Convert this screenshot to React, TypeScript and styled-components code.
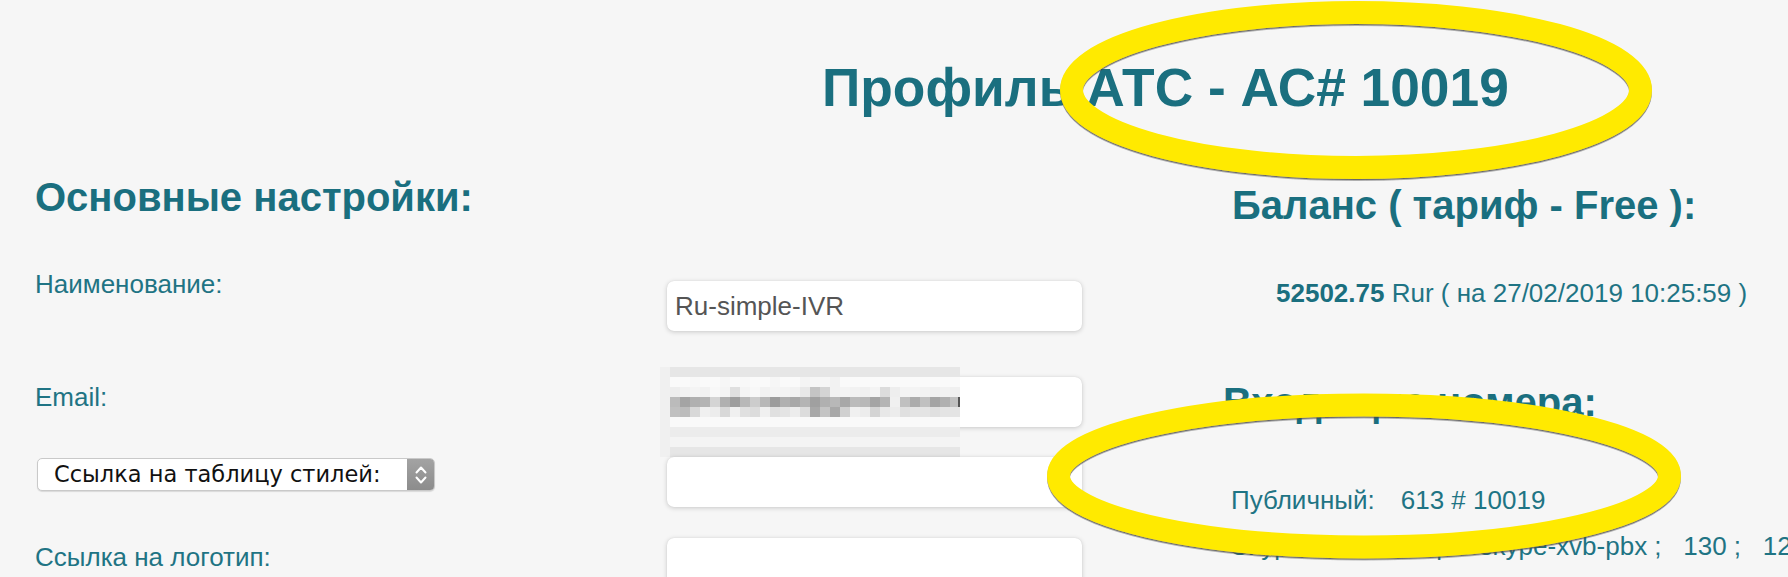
import React from 'react'
import styled, { createGlobalStyle } from 'styled-components'

const TEAL = '#1a6f7f'
const TEAL_TEXT = '#1f7484'

const GlobalStyle = createGlobalStyle`
  html, body {
    margin: 0;
    background: #f6f6f6;
    overflow: hidden;
  }

  body {
    font-family: "Liberation Sans", Arial, sans-serif;
  }
`

const Page = styled.div`
  position: relative;
  width: 1788px;
  height: 577px;
  padding: 57px 0 0 35px;
  box-sizing: border-box;
  overflow: hidden;
  white-space: nowrap;
`

const Title = styled.h1`
  margin: 0 0 0 787px;
  font-size: 53.3px;
  line-height: 62px;
  font-weight: bold;
  color: ${TEAL};
`

const Columns = styled.div`
  display: flex;
  align-items: flex-start;
`

const LeftColumn = styled.div`
  width: 1047px;
  flex: none;
`

const RightColumn = styled.div`
  margin-left: 141px;
  flex: none;
`

const SectionTitle = styled.h2<{ $top: number; $indent?: number }>`
  margin: ${({ $top }) => $top}px 0 0 ${({ $indent = 0 }) => $indent}px;
  font-size: 40px;
  line-height: 46px;
  font-weight: bold;
  color: ${TEAL};
`

const Form = styled.div`
  margin-top: 61px;
  display: flex;
  flex-direction: column;
`

const FormRow = styled.div<{ $after?: number }>`
  display: grid;
  grid-template-columns: 632px 415px;
  align-items: start;
  margin-bottom: ${({ $after = 0 }) => $after}px;
`

const Label = styled.div<{ $shift: number }>`
  margin-top: ${({ $shift }) => $shift}px;
  font-size: 26px;
  line-height: 30px;
  color: ${TEAL_TEXT};
`

const Field = styled.div`
  position: relative;
  height: 50px;
  background: #fff;
  border-radius: 7px;
  box-shadow: 0 1px 5px rgba(0, 0, 0, 0.18), 0 0 1px rgba(0, 0, 0, 0.12);
  display: flex;
  align-items: center;
  padding: 0 8px;
  font-size: 26px;
  line-height: 30px;
  color: #555;
`

const Select = styled.div`
  margin: 1px 0 0 2px;
  width: 398px;
  height: 33px;
  box-sizing: border-box;
  display: flex;
  background: #fff;
  border: 1px solid #c9c9c9;
  border-radius: 5px;
  box-shadow: 0 1px 1px rgba(0, 0, 0, 0.12);
  overflow: hidden;
`

const SelectText = styled.span`
  flex: 1;
  padding-left: 16px;
  font-family: "DejaVu Sans", sans-serif;
  font-size: 22.5px;
  line-height: 31px;
  color: #111;
`

const Stepper = styled.span`
  width: 27px;
  flex: none;
  display: flex;
  align-items: center;
  justify-content: center;
  background: linear-gradient(#a3a3a3, #8c8c8c);
`

const Mosaic = styled.svg`
  position: absolute;
  left: -7px;
  top: -10px;
`

const Line = styled.div<{ $top: number; $indent: number }>`
  margin: ${({ $top }) => $top}px 0 0 ${({ $indent }) => $indent}px;
  font-size: 26px;
  line-height: 30px;
  color: ${TEAL_TEXT};
  display: flex;
  gap: 26px;
`

const Amount = styled.b`
  font-weight: bold;
  color: ${TEAL};
`

const Annotations = styled.svg`
  position: absolute;
  left: 0;
  top: 0;
  pointer-events: none;
`

const ROWS: string[][] = [
  Array(29).fill('e6'),
  ['fa', 'fa', 'f8', 'fa', 'fa', 'f6', 'fa', 'f8', 'fa', 'fa', 'f6', 'fa', 'fa', 'f4', 'f6', 'f6', 'f2', 'fa', 'fa', 'fa', 'fa', 'fa', 'fa', 'fa', 'fa', 'fa', 'fa', 'fa', 'fa'],
  ['ee', 'f2', 'f4', 'f2', 'f8', 'f4', 'e0', 'f4', 'f8', 'f2', 'f4', 'f4', 'f2', 'e8', 'c4', 'd4', 'f2', 'f4', 'f2', 'f0', 'f4', 'dc', 'ee', 'f4', 'f4', 'f2', 'f0', 'f2', 'f0'],
  ['bb', 'a4', 'b0', 'b4', 'd4', 'b0', '9e', 'b8', 'cc', 'b8', '9c', 'b0', 'a8', 'b4', 'a0', 'b0', 'b8', 'a8', 'bb', 'b8', 'a4', 'b4', 'f0', 'c0', 'ac', 'c0', 'a4', 'b0', 'c0'],
  ['c0', 'bc', 'd8', 'f0', 'ec', 'd8', 'f0', 'e0', 'dc', 'f0', 'e0', 'e4', 'ec', 'dc', 'a8', 'c4', 'a8', 'd0', 'f0', 'ec', 'd4', 'e8', 'ec', 'e0', 'e4', 'e4', 'e0', 'e4', 'e4'],
  Array(29).fill('f9'),
  Array(29).fill('ec'),
  Array(29).fill('f4'),
  Array(29).fill('e6'),
]

const EmailMosaic = () => (
  <Mosaic width="300" height="90" viewBox="0 0 300 90">
    {ROWS.map((row, r) => (
      <React.Fragment key={r}>
        <rect x={0} y={r * 10} width={10} height={10} fill="#f0f0f0" />
        {row.map((c, i) => (
          <rect key={i} x={10 + i * 10} y={r * 10} width={10} height={10} fill={`#${c}${c}${c}`} />
        ))}
      </React.Fragment>
    ))}
    <rect x={298} y={30} width={2} height={10} fill="#555" />
  </Mosaic>
)

const Chevrons = () => (
  <svg width="14" height="22" viewBox="0 0 14 22">
    <path d="M2.5 8.5 L7 3.5 L11.5 8.5 M2.5 13.5 L7 18.5 L11.5 13.5" fill="none" stroke="#fff" strokeWidth="2" strokeLinecap="round" strokeLinejoin="round" />
  </svg>
)

const App = () => (
  <>
    <GlobalStyle />
    <Page>
      <Title>Профиль АТС - АС# 10019</Title>
      <Columns>
        <LeftColumn>
          <SectionTitle $top={55}>Основные настройки:</SectionTitle>
          <Form>
            <FormRow $after={46}>
              <Label $shift={-12}>Наименование:</Label>
              <Field>Ru-simple-IVR</Field>
            </FormRow>
            <FormRow $after={30}>
              <Label $shift={5}>Email:</Label>
              <Field>
                <EmailMosaic />
              </Field>
            </FormRow>
            <FormRow $after={31}>
              <Select>
                <SelectText>Ссылка на таблицу стилей:</SelectText>
                <Stepper><Chevrons /></Stepper>
              </Select>
              <Field />
            </FormRow>
            <FormRow>
              <Label $shift={4}>Ссылка на логотип:</Label>
              <Field />
            </FormRow>
          </Form>
        </LeftColumn>
        <RightColumn>
          <SectionTitle $top={63} $indent={9}>Баланс ( тариф - Free ):</SectionTitle>
          <Line $top={50} $indent={53}>
            <span><Amount>52502.75</Amount> Rur ( на 27/02/2019 10:25:59 )</span>
          </Line>
          <SectionTitle $top={71}>Входящие номера:</SectionTitle>
          <Line $top={60} $indent={8}>
            <span>Публичный:</span>
            <span>613 # 10019</span>
          </Line>
          <Line $top={16} $indent={8}>
            <span>Skype id:</span>
            <span>ru-simple-skype-xvb-pbx ;&nbsp;&nbsp; 130 ;&nbsp;&nbsp; 120</span>
          </Line>
        </RightColumn>
      </Columns>
      <Annotations width="1788" height="577" viewBox="0 0 1788 577">
        <defs>
          <filter id="ring-shadow" x="-5%" y="-10%" width="110%" height="120%">
            <feDropShadow dx="0" dy="1.5" stdDeviation="0.6" floodColor="#444" floodOpacity="0.8" />
          </filter>
        </defs>
        <ellipse cx="1356" cy="90" rx="284.5" ry="77.5" fill="none" stroke="#ffea00" strokeWidth="23" filter="url(#ring-shadow)" />
        <ellipse cx="1364" cy="476" rx="305.5" ry="71" fill="none" stroke="#ffea00" strokeWidth="23" filter="url(#ring-shadow)" />
      </Annotations>
    </Page>
  </>
)

export default App
